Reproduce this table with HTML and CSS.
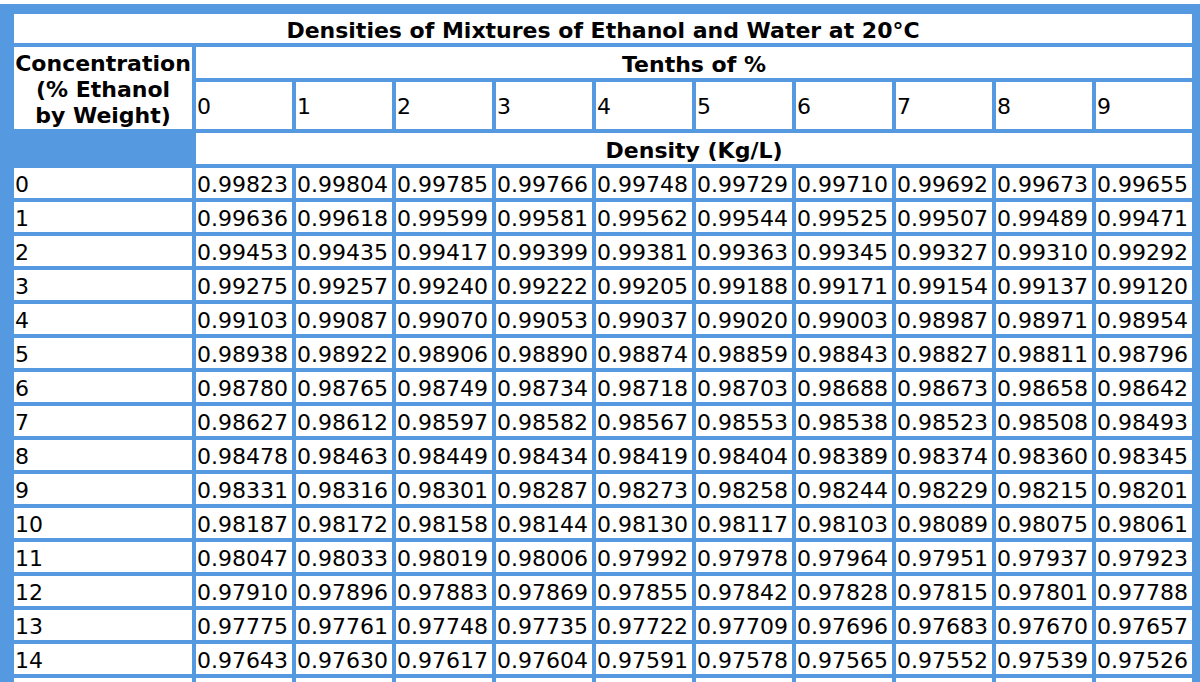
FILE: index.html
```html
<!DOCTYPE html>
<html>
<head>
<meta charset="utf-8">
<link rel="stylesheet" href="styles.css">
</head>
<body>
<table class="dens">
<colgroup>
<col class="c-first">
<col class="c-data"><col class="c-data"><col class="c-data"><col class="c-data"><col class="c-data">
<col class="c-data"><col class="c-data"><col class="c-data"><col class="c-data"><col class="c-data">
</colgroup>
<tr class="r-title"><th colspan="11">Densities of Mixtures of Ethanol and Water at 20°C</th></tr>
<tr class="r-tenths"><th rowspan="2" class="conc">Concentration<br>(% Ethanol<br>by Weight)</th><th colspan="10">Tenths of %</th></tr>
<tr class="r-digits"><td>0</td><td>1</td><td>2</td><td>3</td><td>4</td><td>5</td><td>6</td><td>7</td><td>8</td><td>9</td></tr>
<tr class="r-unit"><th class="blank"></th><th colspan="10">Density (Kg/L)</th></tr>
<tr><td>0</td><td>0.99823</td><td>0.99804</td><td>0.99785</td><td>0.99766</td><td>0.99748</td><td>0.99729</td><td>0.99710</td><td>0.99692</td><td>0.99673</td><td>0.99655</td></tr>
<tr><td>1</td><td>0.99636</td><td>0.99618</td><td>0.99599</td><td>0.99581</td><td>0.99562</td><td>0.99544</td><td>0.99525</td><td>0.99507</td><td>0.99489</td><td>0.99471</td></tr>
<tr><td>2</td><td>0.99453</td><td>0.99435</td><td>0.99417</td><td>0.99399</td><td>0.99381</td><td>0.99363</td><td>0.99345</td><td>0.99327</td><td>0.99310</td><td>0.99292</td></tr>
<tr><td>3</td><td>0.99275</td><td>0.99257</td><td>0.99240</td><td>0.99222</td><td>0.99205</td><td>0.99188</td><td>0.99171</td><td>0.99154</td><td>0.99137</td><td>0.99120</td></tr>
<tr><td>4</td><td>0.99103</td><td>0.99087</td><td>0.99070</td><td>0.99053</td><td>0.99037</td><td>0.99020</td><td>0.99003</td><td>0.98987</td><td>0.98971</td><td>0.98954</td></tr>
<tr><td>5</td><td>0.98938</td><td>0.98922</td><td>0.98906</td><td>0.98890</td><td>0.98874</td><td>0.98859</td><td>0.98843</td><td>0.98827</td><td>0.98811</td><td>0.98796</td></tr>
<tr><td>6</td><td>0.98780</td><td>0.98765</td><td>0.98749</td><td>0.98734</td><td>0.98718</td><td>0.98703</td><td>0.98688</td><td>0.98673</td><td>0.98658</td><td>0.98642</td></tr>
<tr><td>7</td><td>0.98627</td><td>0.98612</td><td>0.98597</td><td>0.98582</td><td>0.98567</td><td>0.98553</td><td>0.98538</td><td>0.98523</td><td>0.98508</td><td>0.98493</td></tr>
<tr><td>8</td><td>0.98478</td><td>0.98463</td><td>0.98449</td><td>0.98434</td><td>0.98419</td><td>0.98404</td><td>0.98389</td><td>0.98374</td><td>0.98360</td><td>0.98345</td></tr>
<tr><td>9</td><td>0.98331</td><td>0.98316</td><td>0.98301</td><td>0.98287</td><td>0.98273</td><td>0.98258</td><td>0.98244</td><td>0.98229</td><td>0.98215</td><td>0.98201</td></tr>
<tr><td>10</td><td>0.98187</td><td>0.98172</td><td>0.98158</td><td>0.98144</td><td>0.98130</td><td>0.98117</td><td>0.98103</td><td>0.98089</td><td>0.98075</td><td>0.98061</td></tr>
<tr><td>11</td><td>0.98047</td><td>0.98033</td><td>0.98019</td><td>0.98006</td><td>0.97992</td><td>0.97978</td><td>0.97964</td><td>0.97951</td><td>0.97937</td><td>0.97923</td></tr>
<tr><td>12</td><td>0.97910</td><td>0.97896</td><td>0.97883</td><td>0.97869</td><td>0.97855</td><td>0.97842</td><td>0.97828</td><td>0.97815</td><td>0.97801</td><td>0.97788</td></tr>
<tr><td>13</td><td>0.97775</td><td>0.97761</td><td>0.97748</td><td>0.97735</td><td>0.97722</td><td>0.97709</td><td>0.97696</td><td>0.97683</td><td>0.97670</td><td>0.97657</td></tr>
<tr><td>14</td><td>0.97643</td><td>0.97630</td><td>0.97617</td><td>0.97604</td><td>0.97591</td><td>0.97578</td><td>0.97565</td><td>0.97552</td><td>0.97539</td><td>0.97526</td></tr>
<tr><td></td><td></td><td></td><td></td><td></td><td></td><td></td><td></td><td></td><td></td><td></td></tr>
</table>
</body>
</html>
```
FILE: styles.css
```css
html, body {
  margin: 0;
  padding: 0;
  background: #ffffff;
  overflow: hidden;
}
body {
  padding-top: 4px;
  font-family: "DejaVu Sans", Verdana, sans-serif;
  color: #000000;
}
.dens {
  table-layout: fixed;
  width: 1200px;
  border-collapse: separate;
  border-spacing: 4px;
  background: #559ae0;
  border-style: solid;
  border-color: #559ae0;
  border-width: 6px 5px 0 10px;
  font-size: 22px;
}
.c-first { width: 178px; }
.c-data { width: 96px; }
.dens td, .dens th {
  background: #ffffff;
  padding: 0 1px;
  overflow: hidden;
  white-space: nowrap;
  text-align: left;
  vertical-align: middle;
  line-height: 26px;
  padding-top: 3px;
  padding-bottom: 0;
}
.dens th {
  font-weight: bold;
  text-align: center;
  font-size: 22px;
  line-height: 24px;
  padding-top: 5px;
}
.dens tr { height: 30px; }
.dens .r-title { height: 29px; }
.dens .r-tenths { height: 31px; }
.dens .r-digits { height: 47px; }
.dens .r-unit { height: 31px; }
.dens th.conc {
  line-height: 26px;
  padding-top: 3px;
}
.dens th.blank {
  background: #559ae0;
}
```
